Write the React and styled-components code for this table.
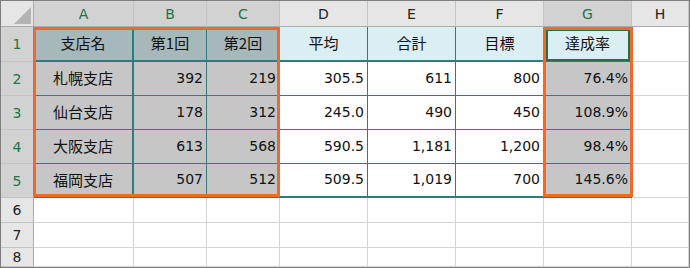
import React from 'react';
import styled, { createGlobalStyle, css } from 'styled-components';

const TEAL = '#2f7b80';
const GRID = '#d4d4d4';
const ORANGE = '#f0682a';
const GREEN = '#217346';
const HEAD_LINE = '#ababab';

const GlobalStyle = createGlobalStyle`
  html, body { margin: 0; padding: 0; background: #ffffff; }
  body { font-family: "Noto Sans CJK JP", "Noto Sans", sans-serif; }
`;

const placed = css`
  grid-row: ${(p) => p.$row};
  grid-column: ${(p) => p.$col};
`;

const Sheet = styled.div`
  box-sizing: border-box;
  width: 690px;
  height: 268px;
  border: 1px solid #7f7f7f;
  display: grid;
  grid-template-columns: 33px 100px 73px 73px 88px 88px 88px 88px 1fr;
  grid-template-rows: 26px 35px 34px 34px 34px 34px 25px 25px 1fr;
  overflow: hidden;
  background: #ffffff;
  color: #111;
`;

const Corner = styled.div`
  ${placed}
  box-sizing: border-box;
  background: #e6e6e6;
  border-right: 1px solid ${HEAD_LINE};
  border-bottom: 1px solid ${HEAD_LINE};
  display: flex;
  align-items: flex-end;
  justify-content: flex-end;
  padding: 0 2px 2px 0;
`;

const headerText = css`
  box-sizing: border-box;
  background: ${(p) => (p.$sel ? '#d2d2d2' : '#e6e6e6')};
  color: ${(p) => (p.$sel ? GREEN : '#222')};
  display: flex;
  align-items: center;
  justify-content: center;
  font-family: "DejaVu Sans", "Noto Sans CJK JP", sans-serif;
  font-size: 14px;
  line-height: 1;
`;

const ColHeader = styled.div`
  ${placed}
  ${headerText}
  border-right: 1px solid #c4c4c4;
  border-bottom: 1px solid ${HEAD_LINE};
`;

const RowHeader = styled.div`
  ${placed}
  ${headerText}
  border-right: 1px solid ${HEAD_LINE};
  border-bottom: 1px solid #c4c4c4;
`;

const Cell = styled.div`
  ${placed}
  box-sizing: border-box;
  background: ${(p) => p.$bg || '#ffffff'};
  border-right: ${(p) => p.$r || `1px solid ${GRID}`};
  border-bottom: ${(p) => p.$b || `1px solid ${GRID}`};
  display: flex;
  align-items: center;
  justify-content: ${(p) => (p.$align === 'right' ? 'flex-end' : 'center')};
  padding: 0 3px 2px 3px;
  font-family: ${(p) =>
    p.$num ? '"DejaVu Sans", "Noto Sans CJK JP", sans-serif' : '"Noto Sans CJK JP", sans-serif'};
  font-size: ${(p) => (p.$num ? '14px' : '15px')};
  line-height: 1;
  white-space: nowrap;
`;

const SelectionBox = styled.div`
  ${placed}
  box-sizing: border-box;
  border: 3px solid ${ORANGE};
  margin: 0 ${(p) => p.$mr || '0'} 1px -1px;
  z-index: 3;
  pointer-events: none;
`;

const ActiveFrame = styled.div`
  ${placed}
  box-sizing: border-box;
  border: 2px solid ${GREEN};
  margin: 2px 2px 1px 2px;
  z-index: 2;
  pointer-events: none;
`;

const columns = ['A', 'B', 'C', 'D', 'E', 'F', 'G', 'H'];
const selectedCols = new Set(['A', 'B', 'C', 'G']);

const header = ['支店名', '第1回', '第2回', '平均', '合計', '目標', '達成率'];
const rows = [
  ['札幌支店', '392', '219', '305.5', '611', '800', '76.4%'],
  ['仙台支店', '178', '312', '245.0', '490', '450', '108.9%'],
  ['大阪支店', '613', '568', '590.5', '1,181', '1,200', '98.4%'],
  ['福岡支店', '507', '512', '509.5', '1,019', '700', '145.6%'],
];

const SEL_GRAY = '#c6c6c6';
const HEAD_SEL = '#a6b8ba';
const HEAD_CYAN = '#daeef3';

function rightBorder(ci) {
  if (ci === 0) return `2px solid ${TEAL}`;
  return `1px solid ${TEAL}`;
}

function CornerTriangle() {
  return (
    <svg width="17" height="17" viewBox="0 0 17 17">
      <polygon points="17,0 17,17 0,17" fill="#b4b4b4" />
    </svg>
  );
}

export default function App() {
  return (
    <>
      <GlobalStyle />
      <Sheet>
        <Corner $row={1} $col={1}>
          <CornerTriangle />
        </Corner>
        {columns.map((c, i) => (
          <ColHeader key={c} $row={1} $col={i + 2} $sel={selectedCols.has(c)}>
            {c}
          </ColHeader>
        ))}

        <RowHeader $row={2} $col={1} $sel>
          1
        </RowHeader>
        {header.map((h, ci) => (
          <Cell
            key={h}
            $row={2}
            $col={ci + 2}
            $bg={ci < 3 ? HEAD_SEL : HEAD_CYAN}
            $r={rightBorder(ci)}
            $b={`2px solid ${TEAL}`}
          >
            {h}
          </Cell>
        ))}
        <Cell $row={2} $col={9} />

        {rows.map((r, ri) => (
          <React.Fragment key={r[0]}>
            <RowHeader $row={ri + 3} $col={1} $sel>
              {ri + 2}
            </RowHeader>
            {r.map((v, ci) => (
              <Cell
                key={ci}
                $row={ri + 3}
                $col={ci + 2}
                $num={ci > 0}
                $align={ci === 0 ? 'center' : 'right'}
                $bg={ci < 3 || ci === 6 ? SEL_GRAY : '#ffffff'}
                $r={rightBorder(ci)}
                $b={ri === rows.length - 1 ? `2px solid ${TEAL}` : `1px solid ${TEAL}`}
              >
                {v}
              </Cell>
            ))}
            <Cell $row={ri + 3} $col={9} />
          </React.Fragment>
        ))}

        {[6, 7, 8].map((n) => (
          <React.Fragment key={n}>
            <RowHeader $row={n + 1} $col={1}>
              {n}
            </RowHeader>
            {columns.map((c, i) => (
              <Cell key={c} $row={n + 1} $col={i + 2} />
            ))}
          </React.Fragment>
        ))}

        <ActiveFrame $row={2} $col={8} />
        <SelectionBox $col="2 / 5" $row="2 / 7" />
        <SelectionBox $col="8 / 9" $row="2 / 7" $mr="-1px" />
      </Sheet>
    </>
  );
}
